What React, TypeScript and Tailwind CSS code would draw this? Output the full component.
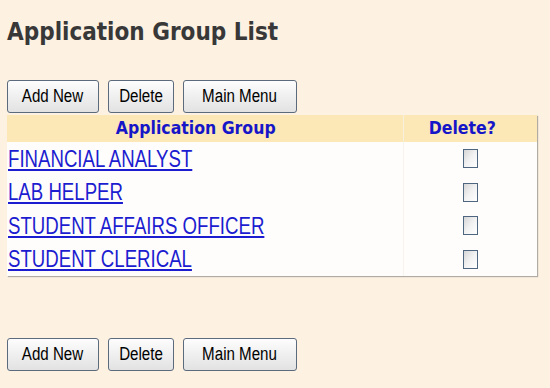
import React from 'react';

const groups = ['FINANCIAL ANALYST', 'LAB HELPER', 'STUDENT AFFAIRS OFFICER', 'STUDENT CLERICAL'];

const sans = "font-['Liberation_Sans',Arial,sans-serif]";
const heading = "font-['DejaVu_Sans_Condensed','DejaVu_Sans',Verdana,sans-serif]";

function ButtonRow() {
  const btn =
    `h-[33px] rounded-[3px] border border-[#5b6a7c] bg-gradient-to-b from-[#fdfdfd] to-[#e2e2e2] text-[18px] text-black ${sans}`;
  return (
    <div className="flex gap-[9px]">
      <button className={`${btn} w-[92px]`}>
        <span className="inline-block scale-x-[0.84]">Add New</span>
      </button>
      <button className={`${btn} w-[66px]`}>
        <span className="inline-block scale-x-[0.84]">Delete</span>
      </button>
      <button className={`${btn} w-[114px]`}>
        <span className="inline-block scale-x-[0.84]">Main Menu</span>
      </button>
    </div>
  );
}

function Checkbox() {
  return (
    <span className="block w-[15px] h-[19px] border border-[#4f6680] bg-gradient-to-br from-[#d6d6d6] via-[#f2f2f2] to-white" />
  );
}

export default function App() {
  return (
    <div className="min-h-screen w-full bg-[#fdf1e1] px-[7px] pt-[18px]">
      <h1 className={`${heading} font-bold text-[24px] leading-[28px] text-[#383838]`}>
        Application Group List
      </h1>

      <div className="mt-[34px]">
        <ButtonRow />
      </div>

      <table className="mt-[2px] w-[530px] border-collapse bg-[#fefdfb] shadow-[1px_1px_1px_#b0aca4]">
        <thead>
          <tr className={`bg-[#fbe8b6] h-[27px] ${heading} font-bold text-[17.5px] text-[#1616c8]`}>
            <th className="w-[396px] p-0 pr-[18px] font-bold">Application Group</th>
            <th className="border-l border-[#f6efdc] p-0 pr-[16px] font-bold">Delete?</th>
          </tr>
        </thead>
        <tbody>
          {groups.map((g) => (
            <tr key={g}>
              <td className="p-0 pl-[1px]">
                <div className="flex h-[33.5px] items-center">
                  <a
                    href="#"
                    className={`${sans} inline-block origin-left scale-x-[0.81] whitespace-nowrap text-[23px] leading-[26px] text-[#1c1cd0] underline`}
                  >
                    {g}
                  </a>
                </div>
              </td>
              <td className="border-l border-[#f7f4ee] p-0">
                <div className="flex h-[33.5px] items-center justify-center">
                  <Checkbox />
                </div>
              </td>
            </tr>
          ))}
        </tbody>
      </table>

      <div className="mt-[62px]">
        <ButtonRow />
      </div>
    </div>
  );
}
